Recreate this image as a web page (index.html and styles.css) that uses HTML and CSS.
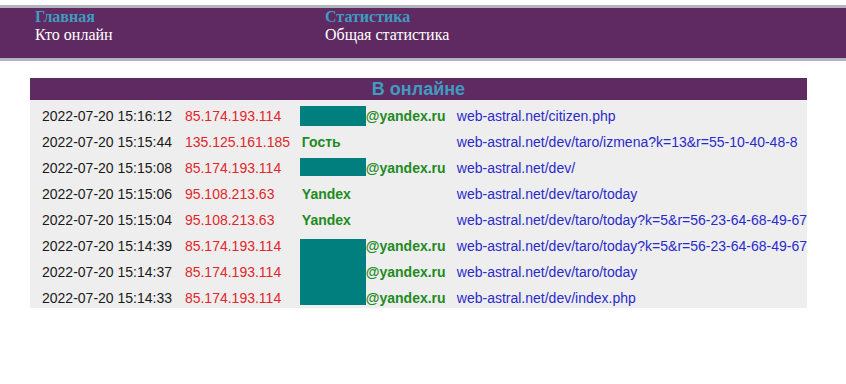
FILE: index.html
```html
<!DOCTYPE html>
<html lang="ru">
<head>
<meta charset="utf-8">
<title>Кто онлайн</title>
<link rel="stylesheet" href="styles.css">
</head>
<body>
<div class="topbar">
  <div class="nav-col nav-first">
    <div class="nav-title">Главная</div>
    <div class="nav-link">Кто онлайн</div>
  </div>
  <div class="nav-col">
    <div class="nav-title">Статистика</div>
    <div class="nav-link">Общая статистика</div>
  </div>
</div>

<table class="online">
  <thead>
    <tr><th colspan="4">В онлайне</th></tr>
  </thead>
  <tbody>
    <tr>
      <td class="time">2022-07-20 15:16:12</td>
      <td class="ip">85.174.193.114</td>
      <td class="who"><div class="user"><span class="mask m1"></span>@yandex.ru</div></td>
      <td class="url">web-astral.net/citizen.php</td>
    </tr>
    <tr>
      <td class="time">2022-07-20 15:15:44</td>
      <td class="ip">135.125.161.185</td>
      <td class="who"><div class="user">Гость</div></td>
      <td class="url">web-astral.net/dev/taro/izmena?k=13&amp;r=55-10-40-48-8</td>
    </tr>
    <tr>
      <td class="time">2022-07-20 15:15:08</td>
      <td class="ip">85.174.193.114</td>
      <td class="who"><div class="user"><span class="mask m3"></span>@yandex.ru</div></td>
      <td class="url">web-astral.net/dev/</td>
    </tr>
    <tr>
      <td class="time">2022-07-20 15:15:06</td>
      <td class="ip">95.108.213.63</td>
      <td class="who"><div class="user">Yandex</div></td>
      <td class="url">web-astral.net/dev/taro/today</td>
    </tr>
    <tr>
      <td class="time">2022-07-20 15:15:04</td>
      <td class="ip">95.108.213.63</td>
      <td class="who"><div class="user">Yandex</div></td>
      <td class="url">web-astral.net/dev/taro/today?k=5&amp;r=56-23-64-68-49-67</td>
    </tr>
    <tr>
      <td class="time">2022-07-20 15:14:39</td>
      <td class="ip">85.174.193.114</td>
      <td class="who"><div class="user"><span class="mask m6"></span>@yandex.ru</div></td>
      <td class="url">web-astral.net/dev/taro/today?k=5&amp;r=56-23-64-68-49-67</td>
    </tr>
    <tr>
      <td class="time">2022-07-20 15:14:37</td>
      <td class="ip">85.174.193.114</td>
      <td class="who"><div class="user"><span class="mask m7"></span>@yandex.ru</div></td>
      <td class="url">web-astral.net/dev/taro/today</td>
    </tr>
    <tr>
      <td class="time">2022-07-20 15:14:33</td>
      <td class="ip">85.174.193.114</td>
      <td class="who"><div class="user"><span class="mask m8"></span>@yandex.ru</div></td>
      <td class="url">web-astral.net/dev/index.php</td>
    </tr>
  </tbody>
</table>
</body>
</html>
```

FILE: styles.css
```css
html, body {
  margin: 0;
  padding: 0;
  background: #ffffff;
}

body {
  padding-top: 5px;
}

.topbar {
  display: flex;
  height: 50px;
  background: #5f2a62;
  border-top: 3px solid #b4b4bc;
  border-bottom: 3px solid #b4b4bc;
  font-family: "Liberation Serif", "Times New Roman", serif;
  font-size: 16px;
  line-height: 18px;
  box-sizing: content-box;
}

.nav-first {
  padding-left: 35px;
  width: 290px;
}

.nav-title {
  color: #3f9cbf;
  font-weight: bold;
}

.nav-link {
  color: #ffffff;
}

.online {
  margin: 17px 0 0 30px;
  width: 777px;
  border-collapse: collapse;
  font-family: "Liberation Sans", Arial, sans-serif;
  font-size: 14px;
  background: #eeeeee;
}

.online th {
  background: #5f2a62;
  color: #3f9cbf;
  font-size: 18px;
  font-weight: bold;
  height: 22px;
  padding: 0;
  line-height: 21px;
  text-align: center;
}

.online td {
  box-sizing: border-box;
  height: 26px;
  padding: 6px 0 0 0;
  line-height: 20px;
  white-space: nowrap;
  vertical-align: middle;
}

.online td.time {
  width: 155px;
  padding-left: 12px;
  color: #1a1a1a;
}

.ip {
  width: 115px;
  color: #e2262a;
}

.who {
  width: 157px;
}

.user {
  display: flex;
  align-items: center;
  height: 20px;
  color: #1f8a1f;
  font-weight: bold;
  padding-left: 2px;
}

.url {
  color: #2a2acb;
}

.mask {
  display: block;
  flex: none;
  width: 66px;
  margin-left: -2px;
  background: #007f7f;
}

.m1 { height: 20px; }
.m3 { height: 18px; align-self: flex-start; }
.m6 { height: 17px; align-self: flex-end; }
.m7 { height: 26px; margin-top: -6px; align-self: flex-start; }
.m8 { height: 23px; margin-top: -6px; align-self: flex-start; }
```
